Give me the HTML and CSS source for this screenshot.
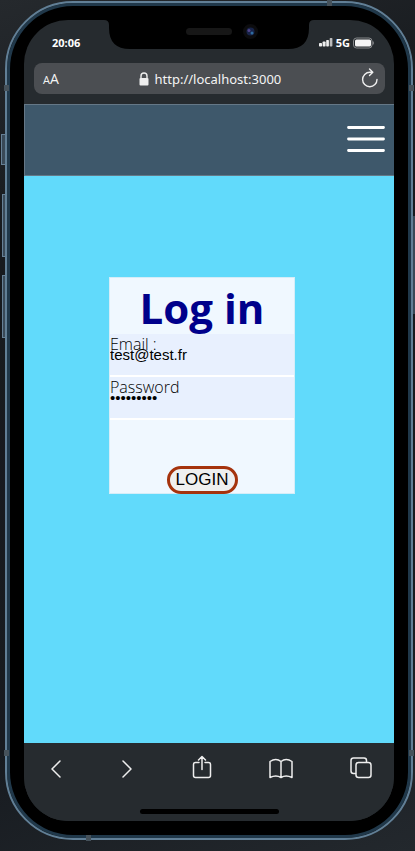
FILE: index.html
```html
<!DOCTYPE html>
<html lang="en">
<head>
<meta charset="utf-8">
<meta name="viewport" content="width=device-width, initial-scale=1">
<title>Log in</title>
<link rel="stylesheet" href="styles.css">
</head>
<body>
<div class="phone">
  <span class="side-key side-key--mute"></span>
  <span class="side-key side-key--up"></span>
  <span class="side-key side-key--down"></span>
  <span class="side-key side-key--power"></span>
  <span class="band band--top"></span>
  <span class="band band--left-top"></span>
  <span class="band band--right-top"></span>
  <span class="band band--left-bottom"></span>
  <span class="band band--right-bottom"></span>
  <span class="band band--bottom"></span>
  <div class="screen">
    <svg class="notch" width="210" height="30" viewBox="0 0 210 30" aria-hidden="true">
      <path d="M0 0H210Q205 0 205 5V8Q205 29 184 29H26Q5 29 5 8V5Q5 0 0 0Z" fill="#000"/>
      <rect x="82" y="8" width="46" height="7" rx="3.500" fill="#171717"/>
      <circle cx="146.500" cy="11.500" r="7.500" fill="#0c0c0e"/>
      <circle cx="146.500" cy="11.500" r="4" fill="#172348"/>
      <circle cx="145" cy="10.500" r="1.500" fill="#51458a"/>
      <circle cx="148" cy="13" r="1.500" fill="#2e6ba0"/>
    </svg>
    <div class="status">
      <span>20:06</span>
      <span class="status__right">
        <svg width="14" height="10" viewBox="0 0 14 10" fill="#eee" aria-hidden="true">
          <rect x="0" y="5" width="3" height="3.500" rx=".7"/><rect x="3.600" y="3.500" width="3" height="5" rx=".7"/><rect x="7.200" y="2" width="2.700" height="6.500" rx=".7"/><rect x="10.700" y="0" width="2.700" height="8.500" rx=".7" fill="#bbb"/>
        </svg>
        <span>5G</span>
        <svg width="21" height="12" viewBox="0 0 21 12" aria-hidden="true">
          <rect x=".5" y="1" width="18.500" height="10" rx="3" fill="none" stroke="#85888a"/>
          <rect x="2" y="2.500" width="16" height="7" rx="1.500" fill="#f4f4f4"/>
          <path d="M20 4.500Q21 6 20 7.500Z" fill="#85888a" stroke="#85888a" stroke-width=".7"/>
        </svg>
      </span>
    </div>
    <div class="address">
      <span class="address__size"><small>A</small>A</span>
      <span class="address__url">
        <svg width="10" height="14" viewBox="0 0 10 14" aria-hidden="true">
          <path d="M2 6V4a3 3 0 0 1 6 0v2" fill="none" stroke="#eee" stroke-width="1.400"/>
          <rect x=".5" y="6" width="9" height="7.500" rx="1" fill="#eee"/>
        </svg>
        http://localhost:3000
      </span>
      <button class="icon-button" type="button" aria-label="Reload">
        <svg width="18" height="22" viewBox="0 0 18 22" fill="none" stroke="#eee" stroke-width="1.400" stroke-linecap="round" stroke-linejoin="round">
          <path d="M16 11.500A7.200 7.200 0 1 1 8.800 4.300H11.500M8.500 1L11.800 4.300L8.500 7.600"/>
        </svg>
      </button>
    </div>
    <header class="site-header">
      <button class="icon-button" type="button" aria-label="Menu">
        <svg width="38" height="28" viewBox="0 0 38 28" stroke="#fff" stroke-width="2.800" stroke-linecap="round">
          <path d="M1.500 2.500H36.500M1.500 14H36.500M1.500 25.500H36.500"/>
        </svg>
      </button>
    </header>
    <main class="content">
      <form class="login">
        <h1>Log in</h1>
        <div class="field">
          <label for="email">Email :</label>
          <input id="email" type="email" value="test@test.fr">
        </div>
        <div class="field">
          <label for="password">Password</label>
          <input id="password" type="password" value="password1">
        </div>
        <button class="login__submit" type="submit">LOGIN</button>
      </form>
    </main>
    <nav class="toolbar" aria-label="Browser">
      <div class="toolbar__row">
        <button class="icon-button" type="button" aria-label="Back">
          <svg width="14" height="26" viewBox="5 0 14 26"><path d="M16 6L8 14L16 22"/></svg>
        </button>
        <button class="icon-button" type="button" aria-label="Forward">
          <svg width="14" height="26" viewBox="5 0 14 26"><path d="M8 6L16 14L8 22"/></svg>
        </button>
        <button class="icon-button" type="button" aria-label="Share">
          <svg width="20" height="26" viewBox="2 0 20 26"><path d="M9 7.500H5.500Q3.500 7.500 3.500 9.500V20.500Q3.500 22.500 5.500 22.500H18.500Q20.500 22.500 20.500 20.500V9.500Q20.500 7.500 18.500 7.500H15M12 14.500V1.500M8.500 5L12 1.500L15.500 5"/></svg>
        </button>
        <button class="icon-button" type="button" aria-label="Bookmarks">
          <svg width="24" height="26" viewBox="0 0 24 26"><path d="M12 6.500Q7 2.500 1 6.500V22.500Q7 19.500 12 22.500Q17 19.500 23 22.500V6.500Q17 2.500 12 6.500V22.500"/></svg>
        </button>
        <button class="icon-button" type="button" aria-label="Tabs">
          <svg width="22" height="26" viewBox="1 0 22 26"><rect x="7" y="7.500" width="15" height="15" rx="2.500"/><path d="M6.500 18.500H4.500Q2 18.500 2 16V5.500Q2 3 4.500 3H15Q17.500 3 17.500 5.500V7"/></svg>
        </button>
      </div>
      <div class="home-bar"></div>
    </nav>
  </div>
</div>
</body>
</html>
```
FILE: styles.css
```css
* {
  box-sizing: border-box;
}

body {
  margin: 0;
  min-height: 100vh;
  padding: 1px 2px 11px 5px;
  display: flex;
  background: linear-gradient(160deg, #25292d, #171a1e 25%, #171b20 75%, #23282d);
  font-family: "Open Sans", "Noto Sans", sans-serif;
  overflow: hidden;
}

.phone {
  position: relative;
  flex: 1;
  display: flex;
  padding: 17px;
  border: 2px solid #617f96;
  border-radius: 68px;
  background: #000;
  background-clip: padding-box;
  box-shadow: inset 0 0 0 3px #20384a;
}

.side-key {
  position: absolute;
  left: -5px;
  width: 3px;
  border: 1px solid #668096;
  border-right: 0;
  background: #394957;
}

.side-key--mute {
  top: 131px;
  left: -6px;
  width: 4px;
  height: 31px;
}

.side-key--up {
  top: 191px;
  height: 63px;
}

.side-key--down {
  top: 272px;
  height: 63px;
}

.side-key--power {
  top: 213px;
  right: -4px;
  left: auto;
  width: 2px;
  height: 98px;
  border: 0;
}

.band {
  position: absolute;
  width: 5px;
  height: 6px;
  background: #46525b;
}

.band--top { top: -3px; right: 79px; }
.band--left-top { top: 82px; left: -3px; }
.band--right-top { top: 82px; right: -3px; }
.band--left-bottom { bottom: 82px; left: -3px; }
.band--right-bottom { bottom: 82px; right: -3px; }
.band--bottom { bottom: -3px; left: 79px; }

.screen {
  position: relative;
  flex: 1;
  display: flex;
  flex-direction: column;
  border-radius: 44px;
  background: #262b2f;
  overflow: hidden;
}

.notch {
  position: absolute;
  top: 0;
  left: 50%;
  transform: translateX(-50%);
}

.status {
  height: 43px;
  padding: 2px 20px 0 28px;
  display: flex;
  align-items: center;
  justify-content: space-between;
  color: #fff;
  font-size: 11px;
  font-weight: 700;
}

.status__right {
  display: flex;
  align-items: center;
  gap: 3px;
}

.address {
  height: 31px;
  margin: 0 9px 10px 10px;
  padding: 0 6px 0 9px;
  display: flex;
  align-items: center;
  justify-content: space-between;
  border-radius: 8px;
  background: #4b4e52;
  color: #f4f4f4;
  font-size: 13px;
}

.address__size {
  font-size: 14px;
}

.address__size small {
  font-size: 11px;
}

.address__url {
  display: flex;
  align-items: center;
  gap: 6px;
  font-family: "Noto Sans", sans-serif;
}

.icon-button {
  display: flex;
  padding: 0;
  border: 0;
  background: none;
}

.site-header {
  height: 72px;
  padding: 0 9px 2px;
  display: flex;
  align-items: center;
  justify-content: flex-end;
  border: 1px solid #657887;
  border-right: 0;
  background: #3e586b;
}

.content {
  flex: 1;
  padding: 101px 14px 0 0;
  background: #61dafb;
}

.login {
  width: 186px;
  height: 217px;
  margin: 0 auto;
  display: flex;
  flex-direction: column;
  border: 1px solid #d5edf8;
  background: #f0f8ff;
}

.login h1 {
  position: relative;
  z-index: 1;
  margin: 0;
  height: 56px;
  color: #00008b;
  font-size: 42px;
  line-height: 60px;
  text-align: center;
}

.field {
  position: relative;
  height: 43px;
}

.field label {
  position: absolute;
  top: 0;
  left: 0;
  color: #000;
  font-size: 16px;
  font-weight: 300;
  line-height: 20px;
}

.field input {
  display: block;
  width: 100%;
  height: 43px;
  padding: 0;
  border: 0;
  border-bottom: 2px solid #fff;
  border-radius: 0;
  background: #e8f0fe;
  color: #000;
  font: 15px "Liberation Sans", sans-serif;
}

.login__submit {
  width: 71px;
  height: 28px;
  margin: auto auto -1px;
  padding: 0;
  border: 3px solid #a5330d;
  border-radius: 14px;
  background: #efefef;
  color: #000;
  font: 17px "Liberation Sans", sans-serif;
}

.toolbar {
  height: 78px;
  padding-top: 12px;
  background: #262b2f;
}

.toolbar__row {
  padding: 0 22px 0 25px;
  display: flex;
  justify-content: space-between;
}

.toolbar svg {
  fill: none;
  stroke: #eee;
  stroke-width: 1.5;
  stroke-linecap: round;
  stroke-linejoin: round;
}

.home-bar {
  width: 139px;
  height: 5px;
  margin: 28px auto 0;
  border-radius: 3px;
  background: #000;
}
```
